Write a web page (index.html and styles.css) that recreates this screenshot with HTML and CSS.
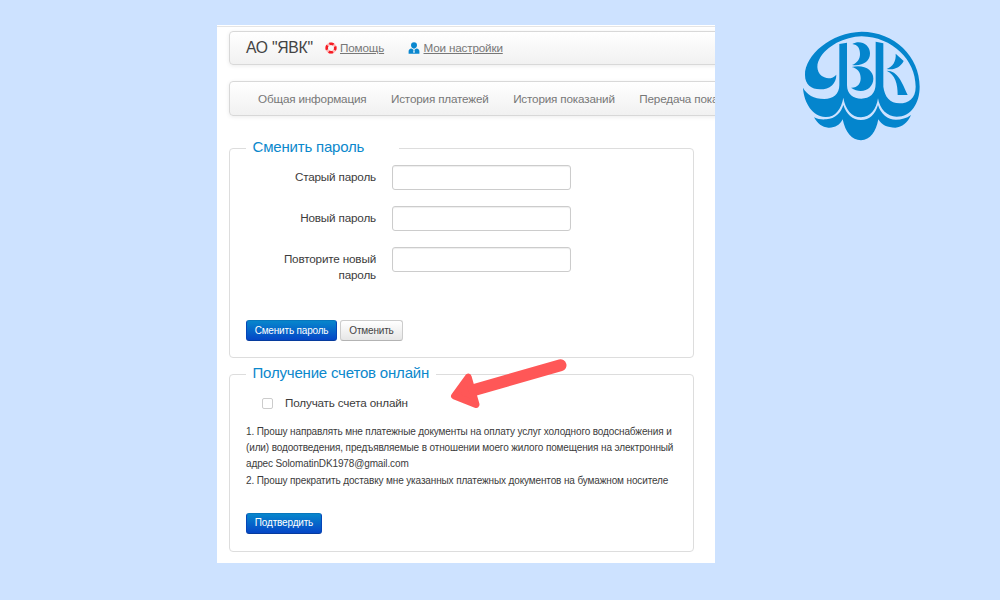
FILE: index.html
```html
<!DOCTYPE html>
<html lang="ru">
<head>
<meta charset="utf-8">
<title>АО "ЯВК" — Мои настройки</title>
<link rel="stylesheet" href="styles.css">
</head>
<body>
<main class="panel">
  <header class="bar header">
    <span class="brand">АО "ЯВК"</span>
    <svg class="help-icon" width="12" height="12" viewBox="0 0 12 12"><circle cx="6" cy="6" r="4.3" fill="none" stroke="#ffb3b3" stroke-width="2.6"/><circle cx="6" cy="6" r="4.3" fill="none" stroke="#f51c24" stroke-width="2.6" stroke-dasharray="4.4 2.354" stroke-dashoffset="2.2"/></svg>
    <a class="help" href="#">Помощь</a>
    <svg class="user-icon" width="12" height="12" viewBox="0 0 12 12"><path fill="#0a87cf" d="M6 0.3C8 .3 9 1.6 9 3.3S7.8 6.7 6 6.7 3 5 3 3.3 4 .3 6 .3ZM.6 11.7V9.5Q.6 7 3.5 6.6L6 8 8.500 6.600Q11.400 7 11.400 9.500V11.700Z"/><path fill="#fff" d="M5.300 7.500h1.400l-.3 1 .4 1.700-.8.8-.8-.8.4-1.700Z"/></svg>
    <a class="settings" href="#">Мои настройки</a>
  </header>
  <nav class="bar nav">
    <a>Общая информация</a><a>История платежей</a><a>История показаний</a><a>Передача показаний</a>
  </nav>
  <fieldset class="box password">
    <legend>Сменить пароль</legend>
    <div class="field"><label for="old">Старый пароль</label><input id="old" type="password"></div>
    <div class="field"><label for="new">Новый пароль</label><input id="new" type="password"></div>
    <div class="field"><label for="rep">Повторите новый<br>пароль</label><input id="rep" type="password"></div>
    <div class="actions"><button class="btn primary change">Сменить пароль</button><button class="btn cancel">Отменить</button></div>
  </fieldset>
  <fieldset class="box online">
    <legend>Получение счетов онлайн</legend>
    <label class="check"><input type="checkbox"><span>Получать счета онлайн</span></label>
    <div class="terms">
      <div>1. Прошу направлять мне платежные документы на оплату услуг холодного водоснабжения и</div>
      <div>(или) водоотведения, предъявляемые в отношении моего жилого помещения на электронный</div>
      <div>адрес SolomatinDK1978@gmail.com</div>
      <div>2. Прошу прекратить доставку мне указанных платежных документов на бумажном носителе</div>
    </div>
    <button class="btn primary confirm">Подтвердить</button>
  </fieldset>
</main>
<svg class="logo" width="132" height="120" viewBox="0 0 396 360" fill="#0485cd">
  <path d="M200 20C108 22 30 90 30 150C30 179 49 193 75 193C105 193 124 176 124 149C115 160 100 163 88 157C66 149 62 122 73 103C95 62 148 36 200 34C292 36 362 105 362 185C362 221 340 235 314 235C284 235 269 215 265 185V55L242 50V175C242 207 224 221 199 221C174 221 156 207 156 180V53L133 57V180C133 207 114 222 88 222C56 222 35 208 24 188C27 235 54 275 91 276C121 277 139 252 145 218C151 253 170 277 198 277C227 277 244 252 249 220C254 252 276 275 305 275C348 275 374 235 374 185C374 95 299 20 200 20Z"/>
  <path d="M57 277C69 283 81 284 94 283C121 281 138 263 145 240C154 267 173 285 198 285C224 285 241 268 249 240C257 267 278 284 303 284C319 284 335 280 348 270C338 293 321 307 301 308C278 308 260 301 250 283C243 320 226 345 198 346C170 346 151 321 143 283C134 301 119 309 100 308C81 307 68 296 57 277Z"/>
  <path d="M172 57C196 43 225 59 225 85C225 110 203 124 171 120C188 114 195 101 195 87C195 70 188 59 172 57ZM170 126C208 117 235 135 235 161C235 190 202 211 168 188C187 189 197 177 197 160C197 141 187 130 170 126Z"/>
  <path d="M302 86L326 108C316 127 298 136 275 132C293 125 304 109 302 86ZM275 137C309 137 321 173 338 210H308C308 175 301 150 275 137Z"/>
</svg>
<svg class="arrow" width="130" height="60" viewBox="0 0 130 60"><path d="M119.500 9.300L28 35.500" stroke="#ff5757" stroke-width="12" stroke-linecap="round"/><path d="M27.200 21.200L13.600 40L35 48.500Z" fill="#ff5757" stroke="#ff5757" stroke-width="7" stroke-linejoin="round"/></svg>
</body>
</html>
```
FILE: styles.css
```css
* { box-sizing: border-box; }
body {
  margin: 0;
  width: 1000px;
  height: 600px;
  padding: 25px 0 0 217px;
  background: #cde2ff;
  overflow: hidden;
  font: 11.700px/16px "Liberation Sans", Arial, sans-serif;
  letter-spacing: -.17px;
  color: #3c3c3c;
}
.panel {
  width: 498px;
  height: 538px;
  background: #fff;
  border-top: 1px solid #fff;
  padding: 5px 0 0 12px;
  overflow: hidden;
  box-shadow: inset 0 2px 0 -1px #e5e5e5;
}
.bar {
  width: 560px;
  height: 35px;
  border: 1px solid #d8d8d8;
  border-radius: 4px;
  background: linear-gradient(#fff, #f1f1f1);
  box-shadow: 0 1px 4px rgba(0, 0, 0, .08);
  display: flex;
  align-items: center;
  white-space: nowrap;
}
.bar a { color: #777; flex: none; }
.header { height: 34px; padding-left: 16px; padding-bottom: 1px; }
.brand { font-size: 15.700px; letter-spacing: -.25px; color: #444; width: 79px; }
.help { width: 68px; margin-left: 3px; }
.user-icon { margin-right: 3.500px; }
.help-icon, .user-icon { flex: none; }
.nav { margin-top: 16px; padding-left: 28px; gap: 24.500px; }
.box {
  width: 465px;
  min-width: 0;
  margin: 0;
  padding: 0 16px;
  border: 1px solid #ddd;
  border-radius: 4px;
}
.box legend {
  padding: 0 0 2px 6.500px;
  font-size: 15px;
  line-height: 18px;
  letter-spacing: -.19px;
  color: #0b88cc;
  white-space: nowrap;
}
.password { margin-top: 22px; height: 220px; }
.password legend { width: 153px; }
.field { display: flex; height: 41px; }
.field:first-of-type { margin-top: 7px; }
.field label { width: 130px; text-align: right; margin-top: 4px; line-height: 16px; }
.field input {
  width: 179px;
  height: 25px;
  margin: 0 0 0 16.400px;
  border: 1px solid #ccc;
  border-radius: 3px;
  box-shadow: inset 0 1px 1px rgba(0, 0, 0, .07);
}
.actions { display: flex; gap: 3px; margin-top: 32px; }
.btn {
  display: block;
  height: 21px;
  padding: 0;
  border: 1px solid #ccc;
  border-bottom-color: #b3b3b3;
  border-radius: 3px;
  background: linear-gradient(#fff, #e6e6e6);
  font: 10px/18px "Liberation Sans", Arial, sans-serif;
  letter-spacing: -.18px;
  color: #444;
  white-space: nowrap;
}
.primary {
  color: #fff;
  background: linear-gradient(#0786cc, #0546c7);
  border-color: #0776bd #0546b8 #063b9d;
}
.change { width: 91px; }
.cancel { width: 63px; }
.confirm { width: 76px; margin-top: 24px; }
.online { margin-top: 6px; height: 188px; }
.online legend { width: 190px; }
.check { display: flex; align-items: center; gap: 12px; height: 16px; margin: 11px 0 0 16px; }
.check input {
  appearance: none;
  width: 11px;
  height: 11px;
  margin: 0;
  border: 1px solid #ccc;
  border-radius: 2px;
}
.terms { margin-top: 13px; font-size: 10px; line-height: 16.200px; letter-spacing: -.13px; white-space: nowrap; }
.logo { position: absolute; left: 795px; top: 25px; }
.arrow { position: absolute; left: 441px; top: 356px; }
```
